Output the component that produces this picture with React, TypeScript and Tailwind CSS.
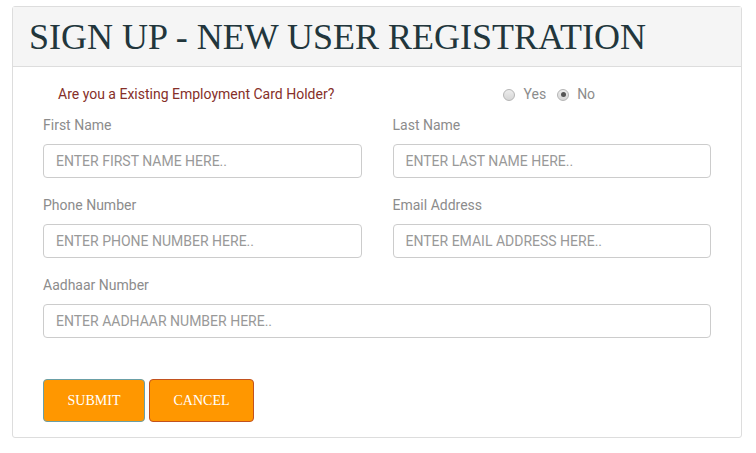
import React from "react";

const sans = { fontFamily: "Roboto, 'Liberation Sans', sans-serif" };

function Field({ label, placeholder }: { label: string; placeholder: string }) {
  return (
    <div className="flex flex-col">
      <label className="text-[14px] leading-[20px] text-[#8c8c8c] mb-[9px]">{label}</label>
      <input
        type="text"
        placeholder={placeholder}
        className="h-[34px] w-full rounded-[4px] border border-[#cccccc] bg-white px-[12px] text-[14px] text-[#555] placeholder:text-[#999] outline-none"
      />
    </div>
  );
}

function Radio({ checked }: { checked?: boolean }) {
  return (
    <span className="inline-flex h-[12px] w-[12px] items-center justify-center rounded-full border border-[#b5b5b5] bg-gradient-to-b from-[#ededed] to-[#d6d6d6]">
      {checked && <span className="h-[5px] w-[5px] rounded-full bg-[#555]" />}
    </span>
  );
}

export default function App() {
  return (
    <div className="bg-white w-[756px] h-[453px] pt-[6px] pl-[12px]" style={sans}>
      <div className="w-[730px] rounded-[3px] border border-[#dddddd] bg-white">
        {/* header */}
        <div className="h-[60px] bg-[#f5f5f5] border-b border-[#dddddd] pl-[16px] flex items-center">
          <h1
            className="text-[36px] leading-none text-[#22363c] pt-[1px]"
            style={{ fontFamily: "'Liberation Serif', 'Times New Roman', serif" }}
          >
            SIGN UP - NEW USER REGISTRATION
          </h1>
        </div>

        {/* body */}
        <div className="px-[30px] pt-[17px] pb-[15px]">
          <div className="grid grid-cols-2 gap-x-[31px] items-center h-[20px] mb-[11px]">
            <span className="pl-[15px] text-[14px] text-[#862f29]">Are you a Existing Employment Card Holder?</span>
            <div className="flex items-center pl-[110px] text-[14px] text-[#8c8c8c]">
              <Radio />
              <span className="ml-[9px]">Yes</span>
              <span className="ml-[11px] flex"><Radio checked /></span>
              <span className="ml-[8px]">No</span>
            </div>
          </div>

          <div className="grid grid-cols-2 gap-x-[31px] gap-y-[17px]">
            <Field label="First Name" placeholder="ENTER FIRST NAME HERE.." />
            <Field label="Last Name" placeholder="ENTER LAST NAME HERE.." />
            <Field label="Phone Number" placeholder="ENTER PHONE NUMBER HERE.." />
            <Field label="Email Address" placeholder="ENTER EMAIL ADDRESS HERE.." />
            <div className="col-span-2">
              <Field label="Aadhaar Number" placeholder="ENTER AADHAAR NUMBER HERE.." />
            </div>
          </div>

          <div
            className="flex gap-[4px] mt-[41px]"
            style={{ fontFamily: "'Liberation Serif', 'Times New Roman', serif" }}
          >
            <button className="h-[43px] w-[102px] rounded-[4px] border border-[#6a9fa6] bg-[#ff9700] text-[14px] text-white">
              SUBMIT
            </button>
            <button className="h-[43px] w-[105px] rounded-[4px] border border-[#c2521f] bg-[#ff9700] text-[14px] text-white">
              CANCEL
            </button>
          </div>
        </div>
      </div>
    </div>
  );
}
